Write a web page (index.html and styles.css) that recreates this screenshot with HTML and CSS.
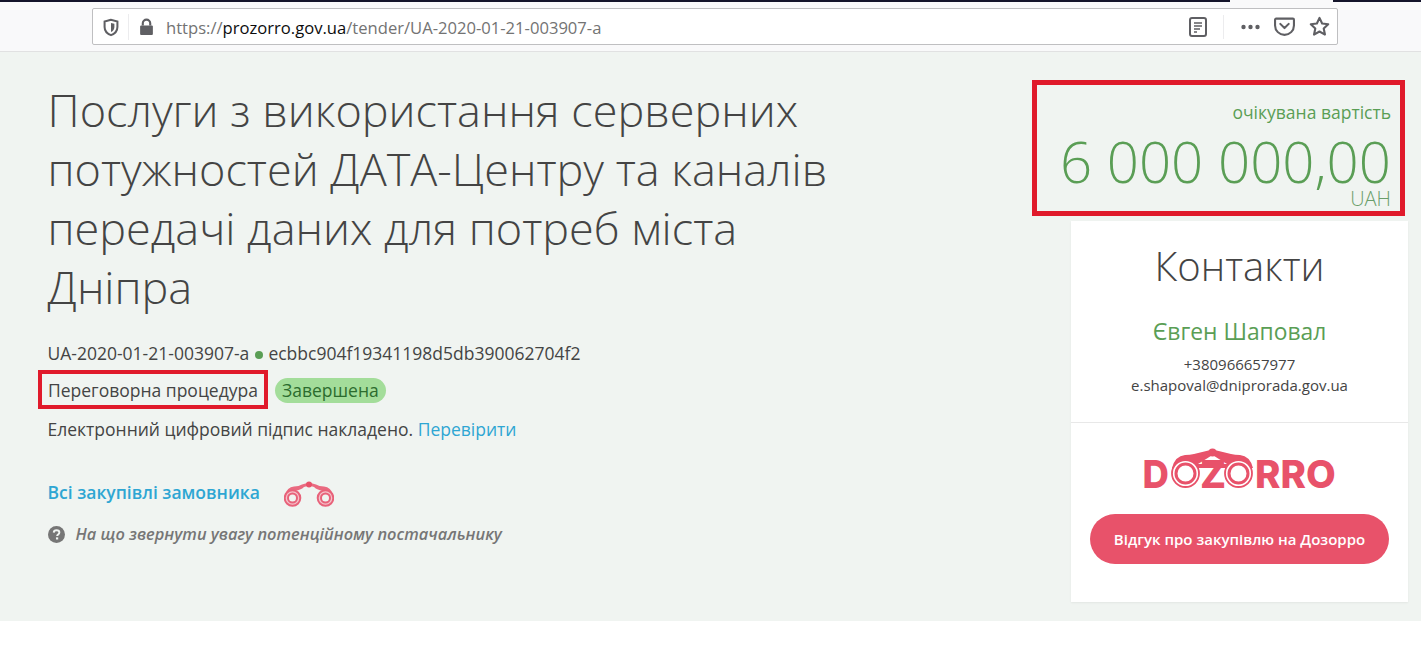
FILE: index.html
```html
<!DOCTYPE html>
<html lang="uk">
<head>
<meta charset="utf-8">
<title>Prozorro</title>
<link rel="stylesheet" href="styles.css">
</head>
<body>
<header class="chrome">
  <div class="tabstrip"><span class="strip-a"></span><span class="strip-gap"></span><span class="strip-b"></span></div>
  <div class="urlbar">
    <svg class="ico shield" viewBox="0 0 16 16"><path d="M8 1.200 2.300 2.600v5c0 3.400 2.400 6 5.700 7.200 3.300-1.200 5.700-3.800 5.700-7.200v-5z" fill="none" stroke="#5f5f63" stroke-width="1.800"/><path d="M8 4v8c1.900-.9 3-2.500 3-4.500V4.700z" fill="#5f5f63"/></svg>
    <span class="sep"></span>
    <svg class="ico lock" viewBox="0 0 16 16"><path d="M4.500 7V5a3.500 3.500 0 0 1 7 0v2" fill="none" stroke="#5f5f63" stroke-width="2"/><rect x="2" y="7" width="12" height="9" rx="1" fill="#5f5f63"/></svg>
    <span class="url">https://<b>prozorro.gov.ua</b>/tender/UA-2020-01-21-003907-a</span>
    <span class="url-actions">
      <svg class="ico reader" viewBox="0 0 18 20"><rect x="1" y="1" width="16" height="18" rx="2" fill="none" stroke="#5f5f63" stroke-width="2"/><path d="M5 6h8M5 9h8M5 12h6M5 15h3" stroke="#5f5f63" stroke-width="1.300"/></svg>
      <span class="sep sep-tall"></span>
      <svg class="ico dots" viewBox="0 0 20 6"><circle cx="3" cy="3" r="2.200" fill="#5f5f63"/><circle cx="10" cy="3" r="2.200" fill="#5f5f63"/><circle cx="17" cy="3" r="2.200" fill="#5f5f63"/></svg>
      <svg class="ico pocket" viewBox="0 0 20 18"><path d="M2 1.500h16a1 1 0 0 1 1 1V8a9 9 0 0 1-18 0V2.500a1 1 0 0 1 1-1z" fill="none" stroke="#5f5f63" stroke-width="2"/><path d="M6 6.500l4 4 4-4" fill="none" stroke="#5f5f63" stroke-width="2" stroke-linecap="round" stroke-linejoin="round"/></svg>
      <svg class="ico star" viewBox="0 0 20 20"><path d="M10 1.800l2.500 5.400 5.800.7-4.300 4 1.200 5.800L10 14.800l-5.200 2.900L6 11.900l-4.300-4 5.800-.7z" fill="none" stroke="#5f5f63" stroke-width="2" stroke-linejoin="round"/></svg>
    </span>
  </div>
</header>

<main class="tender">
  <section class="info">
    <h1 class="title">Послуги з використання серверних потужностей ДАТА-Центру та каналів передачі даних для потреб міста Дніпра</h1>
    <p class="ids">UA-2020-01-21-003907-a <span class="dot"></span> ecbbc904f19341198d5db390062704f2</p>
    <p class="proc"><span class="proc-name">Переговорна процедура</span><span class="status">Завершена</span></p>
    <p class="sign">Електронний цифровий підпис накладено. <a href="#">Перевірити</a></p>
    <p class="all"><a href="#">Всі закупівлі замовника</a>
      <svg class="bino" viewBox="0 0 50 26">
        <path d="M1 14 Q3 6 10 5.500 Q15 5.500 18 3.500 L25 1.500 L32 3.500 Q35 5.500 40 5.500 Q47 6 49 14 L40 10 Q33 9 30 6 L25 4.500 L20 6 Q17 9 10 10 Z" fill="#ea6a80"/>
        <circle cx="25" cy="3.500" r="3" fill="#e8526a"/>
        <circle cx="8.500" cy="17" r="7.800" fill="#f5c3cb" stroke="#e8627a" stroke-width="2"/><circle cx="8.500" cy="17" r="4.500" fill="#f0f4f1" stroke="#e8627a" stroke-width="2"/>
        <circle cx="41.500" cy="17" r="7.800" fill="#f5c3cb" stroke="#e8627a" stroke-width="2"/><circle cx="41.500" cy="17" r="4.500" fill="#f0f4f1" stroke="#e8627a" stroke-width="2"/>
      </svg>
    </p>
    <p class="hint"><svg class="help" viewBox="0 0 16 16"><circle cx="8" cy="8" r="8" fill="#767676"/><path d="M5.400 6.200C5.500 4.700 6.600 4 8 4c1.500 0 2.700.8 2.700 2.200 0 1.900-2.100 1.800-2.100 3.300" fill="none" stroke="#f0f4f1" stroke-width="1.800"/><rect x="7.500" y="10.700" width="2.100" height="2" fill="#f0f4f1"/></svg><em>На що звернути увагу потенційному постачальнику</em></p>
  </section>

  <aside class="side">
    <div class="price">
      <div class="price-label">очікувана вартість</div>
      <div class="price-value">6 000 000,00</div>
      <div class="price-cur">UAH</div>
    </div>
    <div class="card">
      <div class="contacts">
        <h2 class="contacts-title">Контакти</h2>
        <div class="contact-name">Євген Шаповал</div>
        <div class="contact-line">+380966657977</div>
        <div class="contact-line">e.shapoval@dniprorada.gov.ua</div>
      </div>
      <div class="dozorro">
        <svg class="logo" viewBox="0 0 192 44">
          <path d="M28 20 Q31 8 41 7 Q46 7 50 6 L68.500 1.500 L87 6 Q91 7 96 7 Q106 8 109 20 Z" fill="#e8526a"/>
          <path d="M54 16 L68.500 7 L83 16 Z" fill="#fff"/>
          <circle cx="68.500" cy="4.500" r="4" fill="#e8526a"/>
          <text class="logo-text" transform="translate(-1.500 40) scale(.95 1)">D</text>
          <circle cx="41.500" cy="25.500" r="13.500" fill="#fff" stroke="#e8526a" stroke-width="1.800"/><circle cx="41.500" cy="25.500" r="9.500" fill="#fff" stroke="#e8526a" stroke-width="3"/>
          <text class="logo-text" transform="translate(56 40)">Z</text>
          <circle cx="94.500" cy="25.500" r="13.500" fill="#fff" stroke="#e8526a" stroke-width="1.800"/><circle cx="94.500" cy="25.500" r="9.500" fill="#fff" stroke="#e8526a" stroke-width="3"/>
          <text class="logo-text" transform="translate(111 40)">RRO</text>
        </svg>
        <a class="review" href="#">Відгук про закупівлю на Дозорро</a>
      </div>
    </div>
  </aside>
</main>
</body>
</html>
```
FILE: styles.css
```css
* { box-sizing: border-box; }
html, body { margin: 0; padding: 0; }
body { background: #fff; font-family: "Open Sans", "Noto Sans", sans-serif; color: #444; height: 663px; overflow: hidden; }

.chrome { height: 52px; background: #f9f9fa; border-bottom: 1px solid #e1e1e2; position: relative; }
.tabstrip { display: flex; height: 2px; }
.strip-a { width: 1230px; background: #14142a; }
.strip-gap { width: 103px; background: #f9f9fa; }
.strip-b { flex: 1; background: #14142a; }

.urlbar { position: absolute; left: 92px; top: 8px; width: 1246px; height: 37px; background: #fff; border: 1px solid #bfbfc1; border-radius: 2px; display: flex; align-items: center; padding: 2px 0 0 9px; }
.ico { display: block; flex: none; }
.shield { width: 18px; height: 19px; }
.sep { width: 1px; height: 26px; background: #ececee; margin: -2px 9px 0 8px; flex: none; }
.lock { width: 17px; height: 19px; margin-right: 11px; margin-top: -3px; }
.url { font-size: 16.600px; color: #737373; white-space: nowrap; }
.url b { font-weight: 400; color: #0c0c0d; }
.url-actions { margin-left: auto; display: flex; align-items: center; padding-right: 7px; margin-top: -2px; }
.reader { width: 18px; height: 20px; }
.sep-tall { margin: 0 16px 0 16px; height: 24px; }
.dots { width: 21px; height: 6px; margin-right: 13px; }
.pocket { width: 21px; height: 19px; margin-right: 14px; }
.star { width: 21px; height: 21px; }

.tender { height: 569px; background: #f0f4f1; display: flex; justify-content: space-between; padding: 30px 13px 0 47.500px; }
.info { width: 800px; }
.title { margin: -2px 0 25px; font-weight: 300; font-size: 45px; line-height: 59px; color: #444; width: 800px; }
.info p { margin: 0; font-size: 17.500px; line-height: 24px; color: #444; }
.ids { height: 24px; }
.dot { display: inline-block; width: 8px; height: 8px; border-radius: 50%; background: #5a9e55; vertical-align: 1px; margin: 0 1px; }
.info .proc { display: flex; align-items: center; margin-top: 5px; height: 40px; margin-left: -9.500px; }
.proc-name { border: 4px solid #e01a2b; height: 39px; padding: 1px 0 0 6px; align-self: flex-start; display: flex; align-items: center; white-space: nowrap; width: 230px; }
.status { background: #a3dd9a; border-radius: 13px; height: 25px; line-height: 25px; padding: 0 7px; margin-left: 7px; color: #2c6c2e; }
.info .sign { margin-top: 7px; }
a { color: #2ea6d3; text-decoration: none; }
.info .all { margin-top: 36px; display: flex; align-items: center; font-weight: 600; height: 30px; }
.bino { width: 50px; height: 26px; margin-left: 24px; margin-top: 4px; }
.info .hint { margin-top: 15px; display: flex; align-items: center; color: #767676; font-weight: 600; font-size: 16.400px; }
.help { width: 17px; height: 17px; margin-right: 11px; }

.side { width: 375px; display: flex; flex-direction: column; align-items: flex-end; }
.price { width: 373px; height: 136px; margin-top: -2px; border: 5px solid #e01a2b; margin-right: 3px; text-align: right; padding: 15px 9px 0 0; color: #5a9e55; }
.price-label { font-size: 17.500px; line-height: 24px; }
.price-value { font-size: 56.400px; font-weight: 300; line-height: 58px; margin-top: 9px; }
.price-cur { font-size: 20px; font-weight: 300; line-height: 15px; color: #6a9e6a; }

.card { width: 337px; height: 381px; margin-top: 5px; background: #fff; box-shadow: 0 1px 2px rgba(0,0,0,.06); text-align: center; }
.contacts { height: 202px; border-bottom: 1px solid #e8e8e8; padding-top: 18px; }
.contacts-title { margin: 0; font-weight: 300; font-size: 40px; line-height: 54px; color: #444; }
.contact-name { font-size: 22.800px; line-height: 30px; color: #5a9e55; margin-top: 24px; margin-bottom: 7px; }
.contact-line { font-size: 15px; line-height: 21px; color: #444; }
.dozorro { padding-top: 25px; display: flex; flex-direction: column; align-items: center; }
.logo { width: 192px; height: 44px; overflow: visible; }
.logo-text { font-family: Inter, "Liberation Sans", sans-serif; font-weight: 800; font-size: 38.500px; fill: #e8526a; }
.review { display: block; margin-top: 22px; width: 299px; height: 50px; border-radius: 25px; background: #e8526a; color: #fff; font-size: 15px; font-weight: 600; line-height: 50px; }
```
